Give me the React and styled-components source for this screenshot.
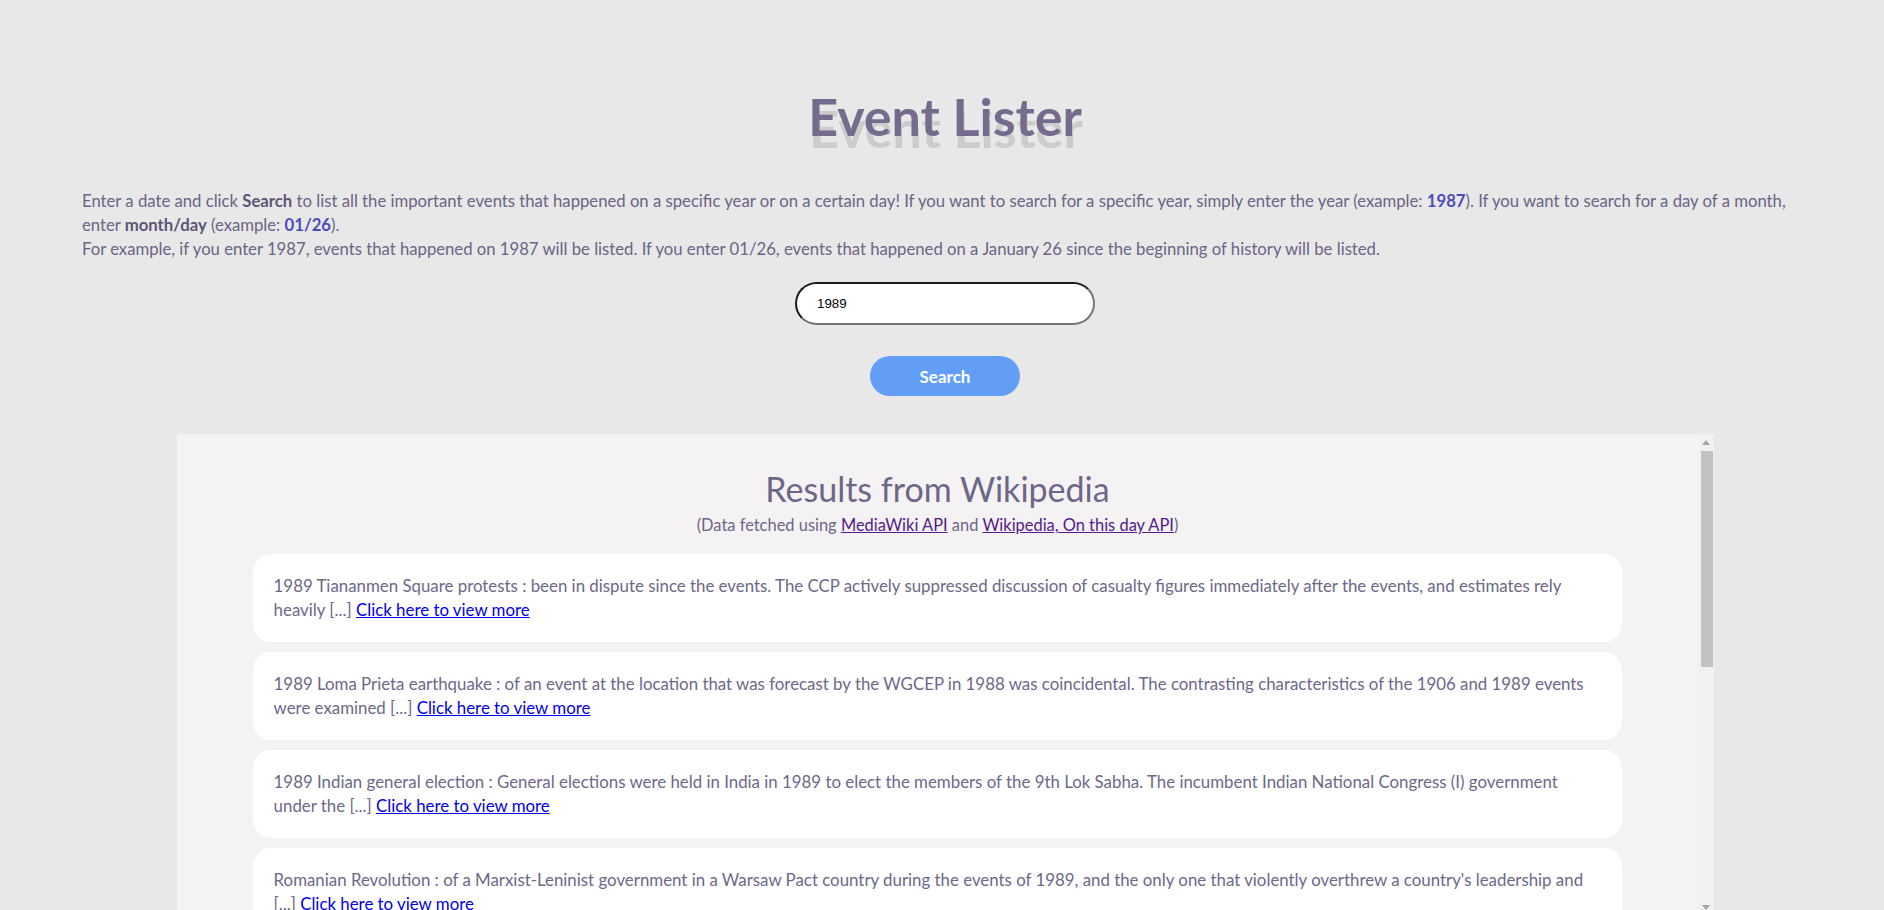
import React from "react";
import styled, { createGlobalStyle } from "styled-components";

const FONT = `"Lato", "Noto Sans", sans-serif`;

const GlobalStyle = createGlobalStyle`
  html, body { margin: 0; padding: 0; background: #e8e8e8; overflow: hidden; }
  body { font-family: ${FONT}; }
  * { box-sizing: border-box; }
`;

const Page = styled.div`
  margin-left: 6px;
  display: flex;
  flex-direction: column;
  align-items: center;
  padding-top: 85px;
`;

const Title = styled.h1`
  margin: 0;
  font-size: 52px;
  font-weight: 700;
  line-height: 62px;
  color: #756b8d;
  text-shadow: 1px 12px 0 #cccccc;
`;

const Intro = styled.p`
  align-self: stretch;
  margin: 42px 0 0;
  padding: 0 60px 0 76px;
  font-size: 16.7px;
  line-height: 24px;
  color: #6b6487;
`;

const Strong = styled.b`
  font-weight: 700;
  color: ${(p) => (p.$accent ? "#4c4cb8" : "#5d5577")};
`;

const Input = styled.input`
  margin-top: 21px;
  width: 300px;
  height: 43px;
  border-radius: 22px;
  border: 2px solid;
  border-color: #1c1c1c #767676 #767676 #1c1c1c;
  padding: 0 20px;
  font-family: "Liberation Sans", Arial, sans-serif;
  font-size: 13.33px;
  color: #000;
  background: #fff;
  outline: none;
`;

const Button = styled.button`
  margin-top: 31px;
  width: 150px;
  height: 40px;
  border: none;
  border-radius: 20px;
  background: #629ef5;
  color: #fff;
  font-family: ${FONT};
  font-size: 17px;
  font-weight: 700;
  cursor: pointer;
`;

const Panel = styled.section`
  margin-top: 38px;
  width: 1537px;
  height: 482px;
  display: flex;
  background: #f4f2f3;
`;

const Scroller = styled.div`
  flex: 1;
  min-width: 0;
  overflow-y: auto;
  scrollbar-width: none;
  &::-webkit-scrollbar { display: none; }
`;

const Rail = styled.div`
  flex: 0 0 15px;
  display: flex;
  flex-direction: column;
  background: #f1f1f1;
`;

const RailButton = styled.div`
  flex: 0 0 17px;
  display: flex;
  align-items: center;
  justify-content: center;
`;

const RailTrack = styled.div`
  flex: 1;
`;

const Thumb = styled.div`
  height: 216px;
  margin: 0 1px 0 2px;
  background: #c1c1c1;
`;

const Arrow = ({ down }) => (
  <svg width="8" height="5" viewBox="0 0 8 5">
    <polygon points={down ? "0,0 8,0 4,5" : "0,5 8,5 4,0"} fill="#a3a3a3" />
  </svg>
);

const PanelHead = styled.header`
  display: flex;
  flex-direction: column;
  align-items: center;
  padding-top: 30px;
  color: #6e6689;
`;

const PanelTitle = styled.h2`
  margin: 0;
  font-size: 34px;
  font-weight: 400;
  line-height: 50px;
`;

const Sub = styled.p`
  margin: 0;
  font-size: 16.46px;
  line-height: 22px;
`;

const ApiLink = styled.a`
  color: #551a8b;
`;

const List = styled.div`
  display: flex;
  flex-direction: column;
  gap: 10px;
  width: 90%;
  margin: 18px auto 8px;
`;

const Card = styled.article`
  background: #fff;
  border-radius: 18px;
  padding: 20px 21px;
  min-height: 88px;
  font-size: 16.85px;
  line-height: 24px;
  color: #6d6889;
`;

const More = styled.a`
  color: #0000ee;
`;

const events = [
  "1989 Tiananmen Square protests : been in dispute since the events. The CCP actively suppressed discussion of casualty figures immediately after the events, and estimates rely heavily",
  "1989 Loma Prieta earthquake : of an event at the location that was forecast by the WGCEP in 1988 was coincidental. The contrasting characteristics of the 1906 and 1989 events were examined",
  "1989 Indian general election : General elections were held in India in 1989 to elect the members of the 9th Lok Sabha. The incumbent Indian National Congress (I) government under the",
  "Romanian Revolution : of a Marxist-Leninist government in a Warsaw Pact country during the events of 1989, and the only one that violently overthrew a country's leadership and",
  "Fall of the Berlin Wall : The fall of the Berlin Wall on 9 November 1989 was a pivotal event in world history which marked the falling of the Iron Curtain and the start of the",
  "Velvet Revolution : was a non-violent transition of power in what was then Czechoslovakia, occurring from 17 November to 28 November 1989. Popular demonstrations against the",
  "Exxon Valdez oil spill : was a major oil spill in Prince William Sound, Alaska, that occurred on March 24, 1989. The oil tanker struck Prince William Sound's Bligh Reef and spilled",
  "1989 Polish legislative election : Parliamentary elections were held in Poland on 4 June 1989 to elect members of the Sejm and the recreated Senate, with a second round on",
  "Revolutions of 1989 : were a revolutionary wave that resulted in the end of most communist states in the world. Sometimes this revolutionary wave is also called the Fall of",
];

export default function App() {
  return (
    <>
      <GlobalStyle />
      <Page>
        <Title>Event Lister</Title>
        <Intro>
          Enter a date and click <Strong>Search</Strong> to list all the important events that happened on a specific year or on a certain day! If you want to search for a specific year, simply enter the year (example: <Strong $accent>1987</Strong>). If you want to search for a day of a month, enter <Strong>month/day</Strong> (example: <Strong $accent>01/26</Strong>).
          <br />
          For example, if you enter 1987, events that happened on 1987 will be listed. If you enter 01/26, events that happened on a January 26 since the beginning of history will be listed.
        </Intro>
        <Input defaultValue="1989" />
        <Button>Search</Button>
        <Panel>
          <Scroller>
            <PanelHead>
              <PanelTitle>Results from Wikipedia</PanelTitle>
              <Sub>
                (Data fetched using <ApiLink href="#">MediaWiki API</ApiLink> and{" "}
                <ApiLink href="#">Wikipedia, On this day API</ApiLink>)
              </Sub>
            </PanelHead>
            <List>
              {events.map((e, i) => (
                <Card key={i}>
                  {e} [...] <More href="#">Click here to view more</More>
                </Card>
              ))}
            </List>
          </Scroller>
          <Rail aria-hidden="true">
            <RailButton>
              <Arrow />
            </RailButton>
            <RailTrack>
              <Thumb />
            </RailTrack>
            <RailButton>
              <Arrow down />
            </RailButton>
          </Rail>
        </Panel>
      </Page>
    </>
  );
}
